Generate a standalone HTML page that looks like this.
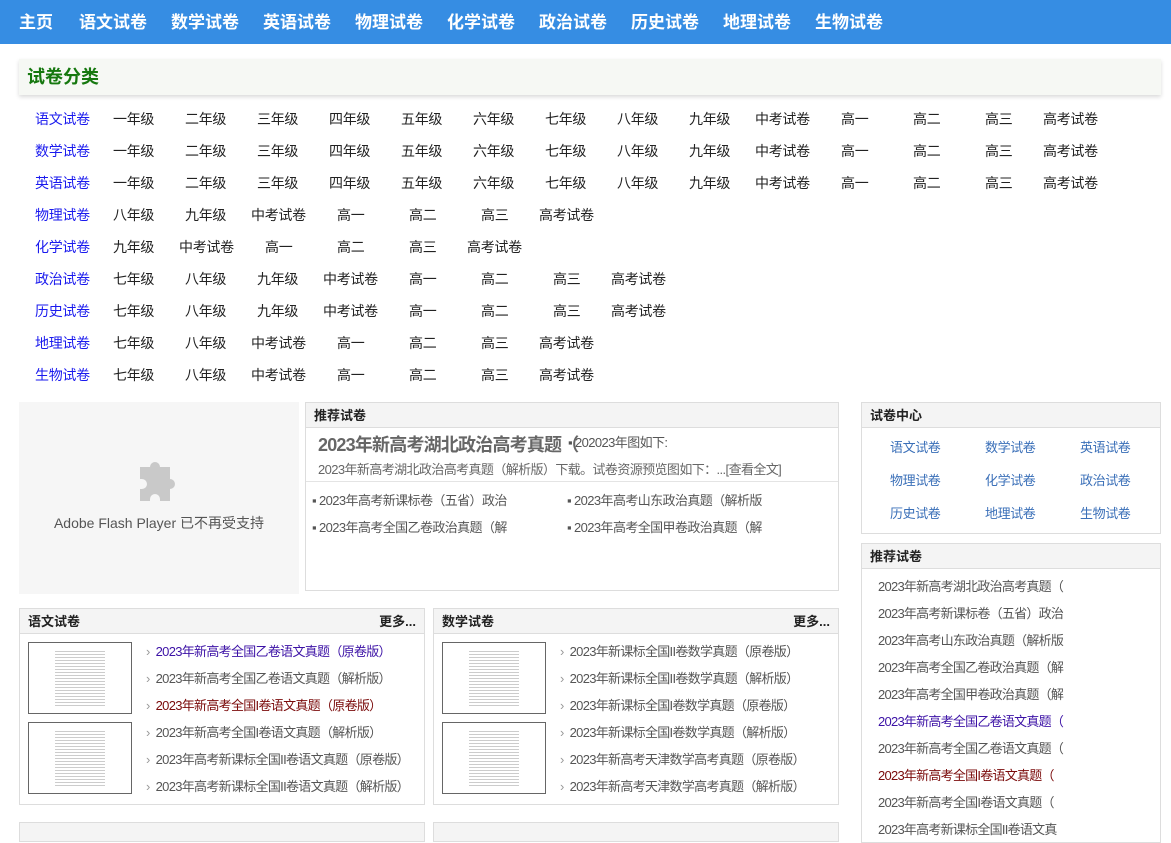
<!DOCTYPE html>
<html><head><meta charset="utf-8"><style>
*{margin:0;padding:0;box-sizing:border-box}
body{width:1171px;height:825px;overflow:hidden;background:#fff;font-family:"Liberation Sans","Noto Sans CJK SC",sans-serif;font-size:13px;color:#555;position:relative}
.nav{height:44px;background:#368de3;display:flex;align-items:center;padding-left:19px;padding-bottom:4px}
.nav span{color:#fff;font-weight:bold;font-size:17px;margin-right:24px}
.nav span:first-child{margin-right:26px}
.cat{position:absolute;left:19px;top:59px;width:1142px;height:36px;background:#f6f8f4;box-shadow:0 2px 4px rgba(0,0,0,.15);padding-left:8px;line-height:36px;font-size:18px;font-weight:bold;color:#16780f}
.row{position:absolute;left:35px;height:20px;display:flex;font-size:14px;color:#222;line-height:20px;letter-spacing:-0.3px}
.row .l{width:78px;color:#1a1aee}
.row span{width:72px}
.row .w4{width:86px}.row .g3{width:58px}
.box{position:absolute;border:1px solid #ddd;background:#fff}
.hd{height:25px;background:#f4f4f4;border-bottom:1px solid #ddd;font-weight:bold;color:#222;font-size:13px;line-height:25px;padding-left:8px;position:relative}
.hd em{position:absolute;right:8px;font-style:normal}
.flash{position:absolute;left:19px;top:402px;width:280px;height:192px;background:#f6f6f6;text-align:center;color:#555;font-size:14px}
.t{position:absolute;white-space:nowrap;letter-spacing:-0.6px}
.thumb{position:absolute;width:104px;height:72px;border:1px solid #666;background:#fff}
.thumb i{position:absolute;left:26px;right:26px;top:6px;bottom:6px;background:repeating-linear-gradient(#fff 0 2px,#ccc 2px 3px)}
.lk{position:absolute;font-size:13px;color:#555;white-space:nowrap;letter-spacing:-0.7px}
.lk:before{content:"›";color:#999;margin-right:6px}
.cg{position:absolute;color:#3a6fb8;font-size:13px;letter-spacing:-0.4px}
.rl{position:absolute;left:16px;font-size:13px;color:#555;white-space:nowrap;letter-spacing:-0.75px}
</style></head><body>
<div class="nav"><span>主页</span><span>语文试卷</span><span>数学试卷</span><span>英语试卷</span><span>物理试卷</span><span>化学试卷</span><span>政治试卷</span><span>历史试卷</span><span>地理试卷</span><span>生物试卷</span></div>
<div class="cat">试卷分类</div>

<div class="row" style="top:109px"><b class="l" style="font-weight:normal">语文试卷</b><span>一年级</span><span>二年级</span><span>三年级</span><span>四年级</span><span>五年级</span><span>六年级</span><span>七年级</span><span>八年级</span><span style="width:66px">九年级</span><span class="w4">中考试卷</span><span>高一</span><span>高二</span><span class="g3">高三</span><span>高考试卷</span></div>
<div class="row" style="top:141px"><b class="l" style="font-weight:normal">数学试卷</b><span>一年级</span><span>二年级</span><span>三年级</span><span>四年级</span><span>五年级</span><span>六年级</span><span>七年级</span><span>八年级</span><span style="width:66px">九年级</span><span class="w4">中考试卷</span><span>高一</span><span>高二</span><span class="g3">高三</span><span>高考试卷</span></div>
<div class="row" style="top:173px"><b class="l" style="font-weight:normal">英语试卷</b><span>一年级</span><span>二年级</span><span>三年级</span><span>四年级</span><span>五年级</span><span>六年级</span><span>七年级</span><span>八年级</span><span style="width:66px">九年级</span><span class="w4">中考试卷</span><span>高一</span><span>高二</span><span class="g3">高三</span><span>高考试卷</span></div>
<div class="row" style="top:205px"><b class="l" style="font-weight:normal">物理试卷</b><span>八年级</span><span style="width:66px">九年级</span><span class="w4">中考试卷</span><span>高一</span><span>高二</span><span class="g3">高三</span><span>高考试卷</span></div>
<div class="row" style="top:237px"><b class="l" style="font-weight:normal">化学试卷</b><span style="width:66px">九年级</span><span class="w4">中考试卷</span><span>高一</span><span>高二</span><span class="g3">高三</span><span>高考试卷</span></div>
<div class="row" style="top:269px"><b class="l" style="font-weight:normal">政治试卷</b><span>七年级</span><span>八年级</span><span style="width:66px">九年级</span><span class="w4">中考试卷</span><span>高一</span><span>高二</span><span class="g3">高三</span><span>高考试卷</span></div>
<div class="row" style="top:301px"><b class="l" style="font-weight:normal">历史试卷</b><span>七年级</span><span>八年级</span><span style="width:66px">九年级</span><span class="w4">中考试卷</span><span>高一</span><span>高二</span><span class="g3">高三</span><span>高考试卷</span></div>
<div class="row" style="top:333px"><b class="l" style="font-weight:normal">地理试卷</b><span>七年级</span><span style="width:66px">八年级</span><span class="w4">中考试卷</span><span>高一</span><span>高二</span><span class="g3">高三</span><span>高考试卷</span></div>
<div class="row" style="top:365px"><b class="l" style="font-weight:normal">生物试卷</b><span>七年级</span><span style="width:66px">八年级</span><span class="w4">中考试卷</span><span>高一</span><span>高二</span><span class="g3">高三</span><span>高考试卷</span></div>

<div class="flash">
<svg style="position:absolute;left:119px;top:57px" width="44" height="44" viewBox="0 0 44 44"><path fill="#c9c9c9" d="M2 8h10a5 5 0 1 1 10 0h10v12a5 5 0 1 1 0 10v12H22v-2a5 5 0 1 0-10 0v2H2V30h2a5 5 0 1 0 0-10H2z"/></svg>
<div class="t" style="left:0;right:0;top:111px;letter-spacing:0">Adobe Flash Player 已不再受支持</div>
</div>

<div class="box" style="left:305px;top:402px;width:534px;height:189px">
<div class="hd">推荐试卷</div>
<div class="t" style="left:12px;top:28px;font-size:18px;font-weight:bold;color:#666;letter-spacing:-0.8px">2023年新高考湖北政治高考真题（</div>
<div class="t" style="left:262px;top:29px;font-size:13px;color:#555">▪ 202023年图如下:</div>
<div class="t" style="left:12px;top:56px;color:#666">2023年新高考湖北政治高考真题（解析版）下载。试卷资源预览图如下：...[查看全文]</div>
<div style="position:absolute;left:0;right:0;top:78px;border-top:1px solid #e4e4e4"></div>
<div class="t" style="left:6px;top:87px">▪ 2023年高考新课标卷（五省）政治</div>
<div class="t" style="left:261px;top:87px">▪ 2023年高考山东政治真题（解析版</div>
<div class="t" style="left:6px;top:114px">▪ 2023年高考全国乙卷政治真题（解</div>
<div class="t" style="left:261px;top:114px">▪ 2023年高考全国甲卷政治真题（解</div>
</div>

<div class="box" style="left:861px;top:402px;width:300px;height:132px">
<div class="hd">试卷中心</div>
<div class="cg" style="left:28px;top:34px">语文试卷</div><div class="cg" style="left:123px;top:34px">数学试卷</div><div class="cg" style="left:218px;top:34px">英语试卷</div>
<div class="cg" style="left:28px;top:67px">物理试卷</div><div class="cg" style="left:123px;top:67px">化学试卷</div><div class="cg" style="left:218px;top:67px">政治试卷</div>
<div class="cg" style="left:28px;top:100px">历史试卷</div><div class="cg" style="left:123px;top:100px">地理试卷</div><div class="cg" style="left:218px;top:100px">生物试卷</div>
</div>

<div class="box" style="left:861px;top:543px;width:300px;height:300px">
<div class="hd">推荐试卷</div>
<div class="rl" style="top:32px">2023年新高考湖北政治高考真题（</div>
<div class="rl" style="top:59px">2023年高考新课标卷（五省）政治</div>
<div class="rl" style="top:86px">2023年高考山东政治真题（解析版</div>
<div class="rl" style="top:113px">2023年高考全国乙卷政治真题（解</div>
<div class="rl" style="top:140px">2023年高考全国甲卷政治真题（解</div>
<div class="rl" style="top:167px;color:#3c12a6">2023年新高考全国乙卷语文真题（</div>
<div class="rl" style="top:194px">2023年新高考全国乙卷语文真题（</div>
<div class="rl" style="top:221px;color:#7a0a0a">2023年新高考全国I卷语文真题（</div>
<div class="rl" style="top:248px">2023年新高考全国I卷语文真题（</div>
<div class="rl" style="top:275px">2023年高考新课标全国II卷语文真</div>
</div>

<div class="box" style="left:19px;top:608px;width:406px;height:197px">
<div class="hd">语文试卷<em>更多...</em></div>
<div class="thumb" style="left:8px;top:33px"><i></i></div>
<div class="thumb" style="left:8px;top:113px"><i></i></div>
<div class="lk" style="left:126px;top:32px;color:#3c12a6">2023年新高考全国乙卷语文真题（原卷版）</div>
<div class="lk" style="left:126px;top:59px">2023年新高考全国乙卷语文真题（解析版）</div>
<div class="lk" style="left:126px;top:86px;color:#7a0a0a">2023年新高考全国I卷语文真题（原卷版）</div>
<div class="lk" style="left:126px;top:113px">2023年新高考全国I卷语文真题（解析版）</div>
<div class="lk" style="left:126px;top:140px">2023年高考新课标全国II卷语文真题（原卷版）</div>
<div class="lk" style="left:126px;top:167px">2023年高考新课标全国II卷语文真题（解析版）</div>
</div>

<div class="box" style="left:433px;top:608px;width:406px;height:197px">
<div class="hd">数学试卷<em>更多...</em></div>
<div class="thumb" style="left:8px;top:33px"><i></i></div>
<div class="thumb" style="left:8px;top:113px"><i></i></div>
<div class="lk" style="left:126px;top:32px">2023年新课标全国II卷数学真题（原卷版）</div>
<div class="lk" style="left:126px;top:59px">2023年新课标全国II卷数学真题（解析版）</div>
<div class="lk" style="left:126px;top:86px">2023年新课标全国I卷数学真题（原卷版）</div>
<div class="lk" style="left:126px;top:113px">2023年新课标全国I卷数学真题（解析版）</div>
<div class="lk" style="left:126px;top:140px">2023年新高考天津数学高考真题（原卷版）</div>
<div class="lk" style="left:126px;top:167px">2023年新高考天津数学高考真题（解析版）</div>
</div>

<div class="box" style="left:19px;top:822px;width:406px;height:20px;background:#f4f4f4"></div>
<div class="box" style="left:433px;top:822px;width:406px;height:20px;background:#f4f4f4"></div>
</body></html>
